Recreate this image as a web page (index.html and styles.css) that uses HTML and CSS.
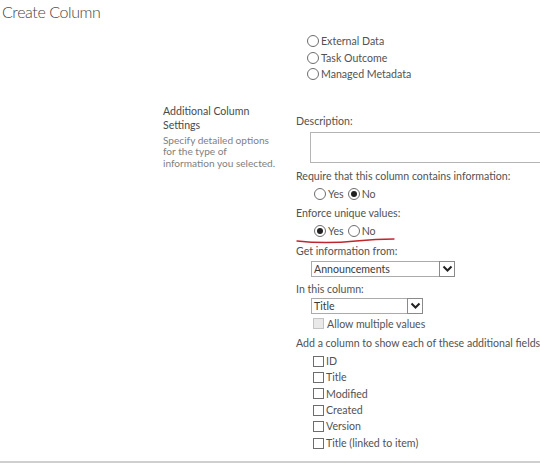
FILE: index.html
```html
<!DOCTYPE html>
<html>
<head>
<meta charset="utf-8">
<link rel="stylesheet" href="styles.css">
</head>
<body>
<div class="page">
  <h1 class="title">Create Column</h1>
  <div class="types">
    <div class="opt"><span class="radio"></span>External Data</div>
    <div class="opt"><span class="radio"></span>Task Outcome</div>
    <div class="opt"><span class="radio"></span>Managed Metadata</div>
  </div>
  <div class="section">
    <div class="side">
      <div class="side-head">Additional Column<br>Settings</div>
      <div class="side-desc">Specify detailed options<br>for the type of<br>information you selected.</div>
    </div>
    <div class="fields">
      <div class="lbl l-desc">Description:</div>
      <div class="textarea"></div>
      <div class="lbl l-req">Require that this column contains information:</div>
      <div class="yn yn-req">
        <span class="opt"><span class="radio"></span>Yes</span>
        <span class="opt"><span class="radio on"></span>No</span>
      </div>
      <div class="lbl l-uni">Enforce unique values:</div>
      <div class="yn yn-uni">
        <span class="opt"><span class="radio on"></span>Yes</span>
        <span class="opt"><span class="radio"></span>No</span>
        <svg class="scribble" width="100" height="8" viewBox="0 0 100 8"><path d="M1 5 C 20 7, 40 7, 60 5 S 90 3, 98 3" fill="none" stroke="#c0262d" stroke-width="1.3" stroke-linecap="round"/></svg>
      </div>
      <div class="lbl l-get">Get information from:</div>
      <div class="select sel-list"><span class="sel-text">Announcements</span><span class="sel-btn"><svg width="11" height="8" viewBox="0 0 11 8"><path d="M1.5 1.5 L5.5 5.5 L9.5 1.5" fill="none" stroke="#222" stroke-width="2"/></svg></span></div>
      <div class="lbl l-col">In this column:</div>
      <div class="select sel-col"><span class="sel-text">Title</span><span class="sel-btn"><svg width="11" height="8" viewBox="0 0 11 8"><path d="M1.5 1.5 L5.5 5.5 L9.5 1.5" fill="none" stroke="#222" stroke-width="2"/></svg></span></div>
      <div class="chk-row disabled"><span class="chk"></span>Allow multiple values</div>
      <div class="lbl l-add">Add a column to show each of these additional fields:</div>
      <div class="chk-list">
        <div class="chk-row"><span class="chk"></span>ID</div>
        <div class="chk-row"><span class="chk"></span>Title</div>
        <div class="chk-row"><span class="chk"></span>Modified</div>
        <div class="chk-row"><span class="chk"></span>Created</div>
        <div class="chk-row"><span class="chk"></span>Version</div>
        <div class="chk-row"><span class="chk"></span>Title (linked to item)</div>
      </div>
    </div>
  </div>
</div>
</body>
</html>
```
FILE: styles.css
```css
html, body {
  margin: 0;
  padding: 0;
  background: #fff;
  overflow: hidden;
}
body {
  font-family: Lato, "Open Sans", sans-serif;
  font-size: 10.6px;
  color: #525252;
  width: 540px;
  height: 463px;
}
.page {
  height: 461px;
  border-bottom: 2px solid #cfcfcf;
  overflow: hidden;
  white-space: nowrap;
}
.title {
  margin: 0;
  padding-left: 2px;
  font-size: 16px;
  letter-spacing: -0.4px;
  font-weight: 300;
  line-height: 24px;
  color: #444;
}
.types {
  margin-top: 9px;
  padding-left: 307px;
}
.types .opt {
  height: 16.5px;
  line-height: 16.5px;
  display: flex;
  align-items: center;
}
.radio {
  display: inline-block;
  box-sizing: border-box;
  width: 12px;
  height: 12px;
  border: 1px solid #6d6d6d;
  border-radius: 50%;
  margin-right: 2px;
  position: relative;
  flex: none;
  background: #fff;
}
.radio.on::after {
  content: "";
  position: absolute;
  left: 2px;
  top: 2px;
  width: 6px;
  height: 6px;
  border-radius: 50%;
  background: #222;
}
.section {
  margin-top: 21px;
  display: flex;
  padding-left: 163px;
}
.side {
  width: 133px;
  flex: none;
}
.side-head {
  font-size: 10.6px;
  line-height: 14.5px;
  color: #4a4a4a;
}
.side-desc {
  margin-top: 2px;
  font-size: 10.1px;
  line-height: 11.6px;
  color: #808080;
}
.fields {
  flex: 1;
  min-width: 0;
}
.lbl {
  line-height: 16px;
  height: 16px;
}
.l-desc { margin-top: 9px; }
.textarea {
  margin: 3px 0 0 14px;
  width: 386px;
  height: 31px;
  box-sizing: border-box;
  border: 1px solid #b4b4b4;
}
.l-req { margin-top: 5px; }
.yn {
  display: flex;
  align-items: center;
  gap: 4px;
  padding-left: 18px;
  height: 18px;
  line-height: 18px;
  position: relative;
}
.yn .opt {
  display: flex;
  align-items: center;
}
.yn-req { margin-top: 1px; }
.l-uni { margin-top: 2px; }
.yn-uni { margin-top: 1px; }
.scribble {
  position: absolute;
  left: 0;
  top: 14px;
}
.l-get { margin-top: 3px; }
.select {
  margin: 2px 0 0 15px;
  height: 16px;
  box-sizing: border-box;
  border: 1px solid #ababab;
  display: flex;
  align-items: center;
  justify-content: space-between;
  line-height: 14px;
}
.sel-list { width: 144px; }
.sel-col { width: 112px; }
.sel-text {
  padding-left: 2px;
  color: #3a3a3a;
}
.sel-btn {
  box-sizing: border-box;
  width: 16px;
  height: 16px;
  margin-right: -1px;
  border: 1px solid #8a8a8a;
  display: flex;
  align-items: center;
  justify-content: center;
  background: #fff;
}
.l-col { margin-top: 4px; }
.sel-col { margin-top: 1px; }
.chk-row {
  display: flex;
  align-items: center;
  height: 16.4px;
  line-height: 16.4px;
  padding-left: 17px;
}
.chk {
  display: inline-block;
  box-sizing: border-box;
  width: 11px;
  height: 11px;
  border: 1px solid #6d6d6d;
  margin-right: 2px;
  flex: none;
}
.disabled {
  margin-top: 2px;
}
.disabled .chk {
  border-color: #c4c4c4;
  background: #e9e9e9;
  margin-right: 3px;
}
.l-add { margin-top: 3px; }
.chk-list { margin-top: 2px; }
```
